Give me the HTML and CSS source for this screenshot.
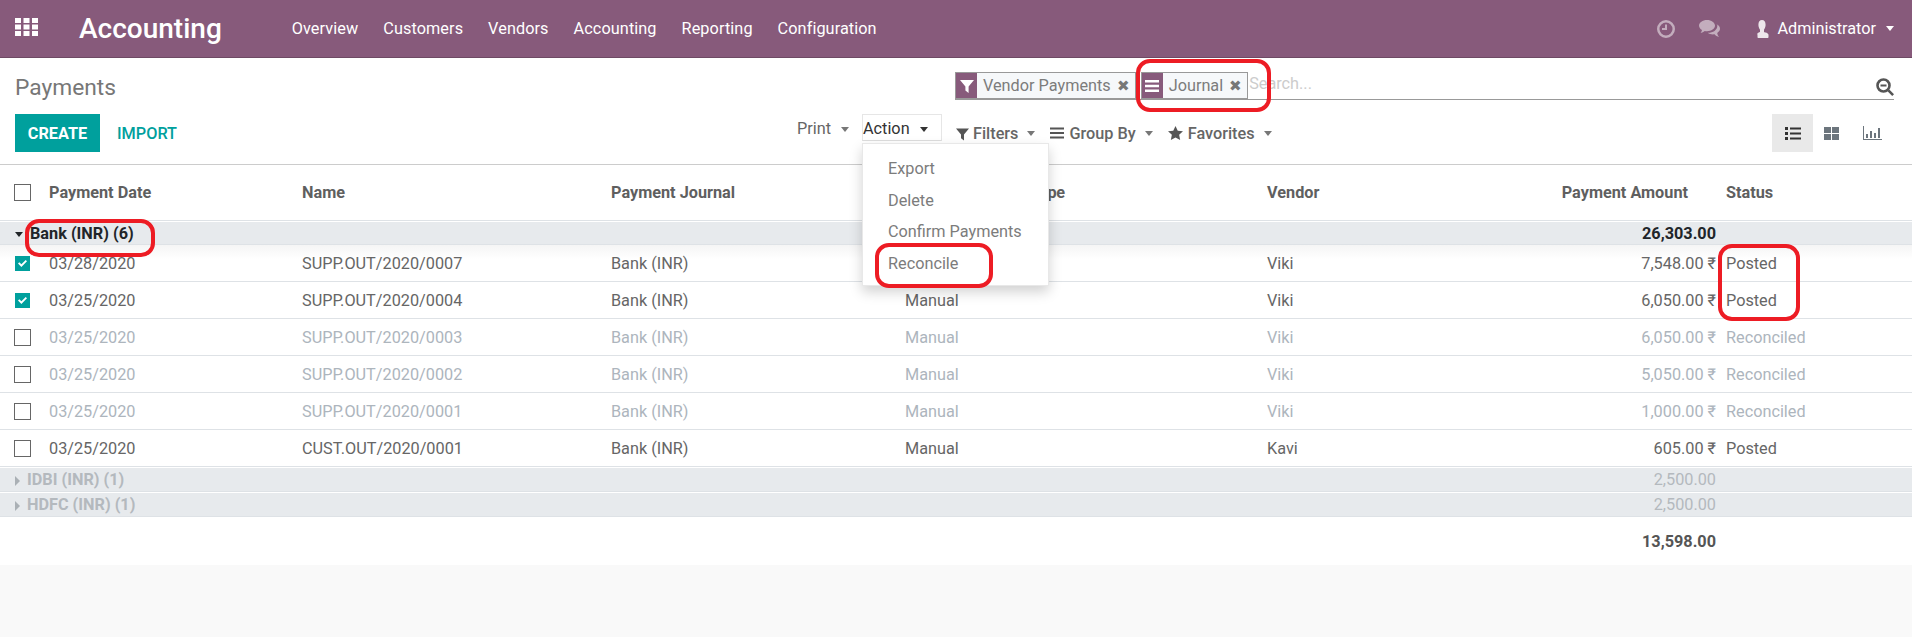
FILE: index.html
```html
<!DOCTYPE html>
<html lang="en">
<head>
    <meta charset="UTF-8">
    <meta name="viewport" content="width=device-width, initial-scale=1.0">
    <title>Payments</title>
    <link rel="stylesheet" href="styles.css">
</head>
<body>
    <nav class="navbar">
        <svg class="apps-icon" viewBox="0 0 23 18"><path d="M0 0h6v5H0zM8.500 0h6v5h-6zM17 0h6v5h-6zM0 6.500h6v5H0zM8.500 6.500h6v5h-6zM17 6.500h6v5h-6zM0 13h6v5H0zM8.500 13h6v5h-6zM17 13h6v5h-6z"/></svg>
        <span class="brand">Accounting</span>
        <a class="nav-link">Overview</a>
        <a class="nav-link">Customers</a>
        <a class="nav-link">Vendors</a>
        <a class="nav-link">Accounting</a>
        <a class="nav-link">Reporting</a>
        <a class="nav-link">Configuration</a>
        <div class="nav-right">
            <svg class="nav-icon clock" viewBox="0 0 18 18"><path fill-rule="evenodd" d="M9 0a9 9 0 1 1 0 18A9 9 0 0 1 9 0zm0 2.500a6.500 6.500 0 1 0 0 13 6.500 6.500 0 0 0 0-13zM8 4.500h2V10H5V8h3z"/></svg>
            <svg class="nav-icon comments" viewBox="0 0 21 17"><path d="M8 0c4.400 0 8 2.500 8 5.600s-3.600 5.600-8 5.600c-.8 0-1.500-.1-2.200-.2C4.600 12 3.200 12.600 1.600 12.900c.7-.8 1.200-1.700 1.400-2.800C1.200 9.100 0 7.500 0 5.600 0 2.500 3.600 0 8 0z"/><path d="M17.400 4.300C19.600 5.200 21 6.800 21 8.700c0 1.700-1.100 3.200-2.800 4.200.2 1.500.8 2.900 1.800 4-1.800-.4-3.400-1.300-4.500-2.600-.5.100-1 .100-1.500.100-2.100 0-4-.6-5.300-1.600 5.300.1 9.600-3 9.600-6.900 0-.5 0-1-.1-1.600z"/></svg>
            <svg class="nav-icon user" viewBox="0 0 16 18"><path d="M8 0c2.300 0 3.600 2 3.600 4.800 0 2-.8 3.900-1.600 5v2.200c1 .5 4.500.9 4.500 2.800V17c0 .6-.4 1-1 1h-9c-.6 0-1-.4-1-1v-2.200C2.500 12.900 5 12.500 6 12V9.800c-.8-1.100-1.600-3-1.600-5C4.400 2 5.700 0 8 0z"/></svg>
            <span class="nav-user">Administrator</span>
            <span class="caret caret-white"></span>
        </div>
    </nav>

    <header class="control-panel">
        <h1 class="page-title">Payments</h1>
        <div class="search-view">
            <div class="facet">
                <span class="facet-icon">
                    <svg viewBox="0 0 14 14"><path d="M0 1h14L8.600 7.500V14L5.400 11.500v-4z"/></svg>
                </span>
                <span class="facet-label">Vendor Payments</span>
                <span class="facet-remove">&#10006;</span>
            </div>
            <div class="facet">
                <span class="facet-icon">
                    <svg viewBox="0 0 14 14"><path d="M0 1h14v2.500H0zM0 5.800h14v2.500H0zM0 10.500h14V13H0z"/></svg>
                </span>
                <span class="facet-label">Journal</span>
                <span class="facet-remove">&#10006;</span>
            </div>
            <span class="search-placeholder">Search...</span>
            <svg class="search-icon" viewBox="0 0 18 18"><circle cx="7.500" cy="7.500" r="6" fill="none" stroke="#555" stroke-width="2.600"/><path d="M4.500 6.500h6v2h-6zM11.500 13.300l1.800-1.800 4.700 4.700-1.800 1.800z" fill="#555"/></svg>
        </div>

        <div class="panel-left">
            <div class="main-buttons">
                <button class="btn-create">CREATE</button>
                <button class="btn-import">IMPORT</button>
            </div>
            <div class="sidebar">
                <span class="sidebar-item">Print<span class="caret"></span></span>
                <div class="action-menu">
                    <span class="action-toggle">Action<span class="caret caret-dark"></span></span>
                    <ul class="dropdown">
                        <li>Export</li>
                        <li>Delete</li>
                        <li>Confirm Payments</li>
                        <li>Reconcile</li>
                    </ul>
                </div>
            </div>
        </div>
        <div class="panel-right">
            <div class="search-options">
                <span class="option">
                    <svg class="option-icon filter-icon" viewBox="0 0 14 14"><path d="M0 1h14L8.600 7.500V14L5.400 11.500v-4z"/></svg>Filters<span class="caret"></span>
                </span>
                <span class="option">
                    <svg class="option-icon bars-icon" viewBox="0 0 14 14"><path d="M0 1.500h14v2H0zM0 6h14v2H0zM0 10.500h14v2H0z"/></svg>Group By<span class="caret"></span>
                </span>
                <span class="option">
                    <svg class="option-icon star-icon" viewBox="0 0 16 15"><path d="M8 0l2.400 5 5.600.7-4.100 3.800 1.100 5.500L8 12.300 3 15l1.100-5.500L0 5.700 5.600 5z"/></svg>Favorites<span class="caret"></span>
                </span>
            </div>
            <div class="view-switch">
                <button class="view-btn active">
                    <svg class="view-list" viewBox="0 0 16 13"><path d="M0 0h3v3H0zM5 .500h11v2H5zM0 5h3v3H0zM5 5.500h11v2H5zM0 10h3v3H0zM5 10.500h11v2H5z"/></svg>
                </button>
                <button class="view-btn">
                    <svg class="view-kanban" viewBox="0 0 15 13"><path d="M0 0h7v6H0zM8 0h7v6H8zM0 7h7v6H0zM8 7h7v6H8z"/></svg>
                </button>
                <button class="view-btn">
                    <svg class="view-graph" viewBox="0 0 19 14"><path d="M0 0h1v13h18v1H0z"/><path d="M3 8h2v4H3zM7 5h2v7H7zM11 7h2v5h-2zM15 2h2v10h-2z"/></svg>
                </button>
            </div>
        </div>
    </header>

    <table class="list-table">
        <colgroup>
            <col class="col-select">
            <col class="col-date">
            <col class="col-name">
            <col class="col-journal">
            <col class="col-type">
            <col class="col-vendor">
            <col class="col-amount">
            <col class="col-status">
        </colgroup>
        <thead>
            <tr>
                <th><span class="checkbox"></span></th>
                <th>Payment Date</th>
                <th>Name</th>
                <th>Payment Journal</th>
                <th class="type-head">Payment Method Type</th>
                <th>Vendor</th>
                <th class="amount-head">Payment Amount</th>
                <th>Status</th>
            </tr>
        </thead>
        <tbody>
            <tr class="group-row">
                <td colspan="6"><span class="group-open"></span>Bank (INR) (6)</td>
                <td class="amount">26,303.00</td>
                <td></td>
            </tr>
            <tr class="first-row">
                <td><span class="checkbox checked"><svg viewBox="0 0 9 7"><path d="M0 3.500l1.300-1.300L3.400 4.300 7.700 0 9 1.300 3.400 7z"/></svg></span></td>
                <td>03/28/2020</td>
                <td>SUPP.OUT/2020/0007</td>
                <td>Bank (INR)</td>
                <td>Manual</td>
                <td>Viki</td>
                <td class="amount">7,548.00&nbsp;₹</td>
                <td>Posted</td>
            </tr>
            <tr>
                <td><span class="checkbox checked"><svg viewBox="0 0 9 7"><path d="M0 3.500l1.300-1.300L3.400 4.300 7.700 0 9 1.300 3.400 7z"/></svg></span></td>
                <td>03/25/2020</td>
                <td>SUPP.OUT/2020/0004</td>
                <td>Bank (INR)</td>
                <td>Manual</td>
                <td>Viki</td>
                <td class="amount">6,050.00&nbsp;₹</td>
                <td>Posted</td>
            </tr>
            <tr class="muted">
                <td><span class="checkbox"></span></td>
                <td>03/25/2020</td>
                <td>SUPP.OUT/2020/0003</td>
                <td>Bank (INR)</td>
                <td>Manual</td>
                <td>Viki</td>
                <td class="amount">6,050.00&nbsp;₹</td>
                <td>Reconciled</td>
            </tr>
            <tr class="muted">
                <td><span class="checkbox"></span></td>
                <td>03/25/2020</td>
                <td>SUPP.OUT/2020/0002</td>
                <td>Bank (INR)</td>
                <td>Manual</td>
                <td>Viki</td>
                <td class="amount">5,050.00&nbsp;₹</td>
                <td>Reconciled</td>
            </tr>
            <tr class="muted">
                <td><span class="checkbox"></span></td>
                <td>03/25/2020</td>
                <td>SUPP.OUT/2020/0001</td>
                <td>Bank (INR)</td>
                <td>Manual</td>
                <td>Viki</td>
                <td class="amount">1,000.00&nbsp;₹</td>
                <td>Reconciled</td>
            </tr>
            <tr>
                <td><span class="checkbox"></span></td>
                <td>03/25/2020</td>
                <td>CUST.OUT/2020/0001</td>
                <td>Bank (INR)</td>
                <td>Manual</td>
                <td>Kavi</td>
                <td class="amount">605.00&nbsp;₹</td>
                <td>Posted</td>
            </tr>
            <tr class="group-row closed">
                <td colspan="6"><span class="group-shut"></span>IDBI (INR) (1)</td>
                <td class="amount">2,500.00</td>
                <td></td>
            </tr>
            <tr class="group-row closed">
                <td colspan="6"><span class="group-shut"></span>HDFC (INR) (1)</td>
                <td class="amount">2,500.00</td>
                <td></td>
            </tr>
        </tbody>
        <tfoot>
            <tr>
                <td colspan="6"></td>
                <td class="amount">13,598.00</td>
                <td></td>
            </tr>
        </tfoot>
    </table>

    <!-- red marker rings drawn over the screenshot -->
    <div class="ring ring-journal"></div>
    <div class="ring ring-bank"></div>
    <div class="ring ring-reconcile"></div>
    <div class="ring ring-posted"></div>
</body>
</html>
```

FILE: styles.css
```css
* {
    box-sizing: border-box;
}
body {
    position: relative;
    margin: 0;
    min-height: 637px;
    background-color: #f9f9f9;
    font-family: Roboto, "Noto Sans", sans-serif;
    font-size: 16.250px;
    color: #666;
}
button {
    border: none;
    background: none;
    font-family: inherit;
    cursor: pointer;
}

/* top bar */
.navbar {
    display: flex;
    align-items: center;
    height: 58px;
    padding: 0 18px 0 15px;
    background-color: #875a7b;
    border-bottom: 1px solid #6e4a64;
    color: #fff;
}
.apps-icon {
    width: 23px;
    height: 18px;
    margin-bottom: 4px;
    fill: #fff;
}
.brand {
    margin-left: 41px;
    margin-right: 70px;
    font-size: 28px;
    font-weight: 500;
}
.nav-link {
    margin-right: 25px;
    font-size: 16.250px;
    letter-spacing: 0.080px;
}
.nav-right {
    display: flex;
    align-items: center;
    margin-left: auto;
}
.nav-icon {
    fill: #fff;
    opacity: 0.5;
}
.clock {
    width: 18px;
    height: 18px;
    margin-right: 24px;
}
.comments {
    width: 21px;
    height: 17px;
    margin-right: 34px;
}
.user {
    width: 16px;
    height: 18px;
    margin-right: 7px;
    opacity: 0.85;
}
.nav-user {
    font-size: 16.250px;
}
.caret {
    display: inline-block;
    margin-left: 10px;
    border-top: 5px solid #777;
    border-left: 4.500px solid transparent;
    border-right: 4.500px solid transparent;
    vertical-align: middle;
}
.caret-white {
    border-top-color: #fff;
}
.caret-dark {
    border-top-color: #333;
}

/* control panel */
.control-panel {
    display: grid;
    grid-template-columns: 955px 1fr;
    grid-template-rows: 56px 38px;
    height: 107px;
    padding-right: 18px;
    background-color: #fff;
    border-bottom: 1px solid #ccc;
}
.page-title {
    margin: 16px 0 0 15px;
    font-size: 22.750px;
    font-weight: 400;
    color: #777;
}
.search-view {
    display: flex;
    align-items: flex-start;
    height: 42px;
    padding-top: 14px;
    border-bottom: 1px solid #999;
}
.facet {
    display: flex;
    align-items: center;
    height: 27px;
    background-color: #f6f8fa;
    border: 1px solid #999;
}
.facet + .facet {
    margin-left: 5px;
}
.facet-icon {
    display: flex;
    align-items: center;
    justify-content: center;
    width: 21px;
    align-self: stretch;
    background-color: #875a7b;
}
.facet-icon svg {
    width: 14px;
    height: 14px;
    fill: #fff;
}
.facet-label {
    margin-left: 6px;
    color: #7c7c7c;
}
.facet-remove {
    margin: 0 5px 0 6px;
    font-size: 15px;
    color: #777;
}
.search-placeholder {
    margin: 2px 0 0 1px;
    color: #ccc;
}
.search-icon {
    width: 18px;
    height: 18px;
    margin: 6px 0 0 auto;
}
.panel-left {
    display: flex;
    justify-content: space-between;
    padding-right: 13px;
    padding-left: 15px;
}
.main-buttons {
    display: flex;
    align-items: stretch;
}
.btn-create {
    width: 85px;
    padding: 0;
    background-color: #00a09d;
    color: #fff;
    font-size: 16.250px;
    font-weight: 700;
}
.btn-import {
    margin-left: 17px;
    padding: 0;
    color: #00a09d;
    font-size: 16.250px;
    font-weight: 500;
}
.sidebar {
    display: flex;
    align-items: flex-start;
}
.sidebar-item {
    height: 27px;
    margin-right: 13px;
    line-height: 29px;
}
.action-menu {
    position: relative;
}
.action-toggle {
    display: block;
    width: 80px;
    height: 27px;
    line-height: 27px;
    border: 1px solid #e6e6e6;
    border-bottom-color: #ddd;
    color: #333;
}
.dropdown {
    position: absolute;
    z-index: 5;
    top: 29px;
    left: 0;
    width: 187px;
    height: 143px;
    margin: 0;
    padding: 9px 0 0 25px;
    list-style: none;
    background-color: #fff;
    border: 1px solid #e8e8e8;
    box-shadow: 0 6px 12px rgba(0, 0, 0, 0.18);
    color: #7c7c7c;
}
.dropdown li {
    height: 31.500px;
    line-height: 31.500px;
}
.panel-right {
    display: flex;
    justify-content: space-between;
}
.search-options {
    display: flex;
    align-items: center;
    height: 38px;
}
.option {
    display: flex;
    align-items: center;
    margin-right: 15px;
    font-weight: 500;
    font-size: 16.250px;
    color: #666;
}
.option .caret {
    margin-left: 9px;
}
.option-icon {
    fill: #555;
}
.filter-icon {
    width: 13px;
    height: 14px;
    margin: 1px 4px 0 1px;
}
.bars-icon {
    width: 14px;
    height: 14px;
    margin-right: 5px;
}
.star-icon {
    width: 15px;
    height: 14px;
    margin-right: 5px;
}
.view-switch {
    display: grid;
    grid-template-columns: 41px 37px 44px;
    height: 38px;
}
.view-btn {
    display: flex;
    align-items: center;
    justify-content: center;
    padding: 0;
}
.view-btn.active {
    background-color: #e9e9e9;
}
.view-list {
    width: 16px;
    height: 13px;
    fill: #333;
}
.view-kanban {
    width: 15px;
    height: 13px;
    fill: #6c757d;
}
.view-graph {
    width: 19px;
    height: 14px;
    fill: #6c757d;
}

/* list */
.list-table {
    width: 100%;
    table-layout: fixed;
    border-collapse: separate;
    border-spacing: 0;
    background-color: #fff;
}
.col-select { width: 41px; }
.col-date { width: 253px; }
.col-name { width: 309px; }
.col-journal { width: 294px; }
.col-type { width: 362px; }
.col-vendor { width: 200px; }
.col-amount { width: 261px; }
.col-status { width: 192px; }

.list-table th,
.list-table td {
    padding: 0 0 0 8px;
    text-align: left;
    white-space: nowrap;
}
.list-table th {
    height: 56px;
    font-weight: 700;
    font-size: 16.250px;
    color: #5f5f5f;
    border-bottom: 1px solid #dee2e6;
}
.list-table th:first-child,
.list-table td:first-child {
    padding-left: 14px;
}
.list-table th.type-head {
    letter-spacing: -0.200px;
}
.list-table tbody td {
    height: 37px;
    border-bottom: 1px solid #dee2e6;
}
.list-table td.amount {
    padding: 0 4px 0 0;
    text-align: right;
}
.list-table th.amount-head {
    padding: 0 32px 0 0;
    text-align: right;
}
.list-table td:last-child,
.list-table th:last-child {
    padding-left: 6px;
}
.checkbox {
    display: flex;
    align-items: center;
    justify-content: center;
    width: 17px;
    height: 17px;
    border: 1px solid #666;
}
.checkbox.checked {
    width: 15px;
    height: 15px;
    margin-left: 1px;
    border: none;
    background-color: #00a09d;
}
.checkbox svg {
    width: 9px;
    height: 7px;
    fill: #fff;
}
.first-row td {
    background: linear-gradient(#f5f5f5, #fff 40%);
}
.muted td {
    color: #adb5bd;
}
.group-row td {
    background-color: #e7eaed;
    border-top: 1px solid #fff;
    font-weight: 700;
    color: #212529;
}
.list-table tbody .group-row td {
    height: 24px;
}
.list-table tbody .group-row.closed td {
    height: 25px;
    color: #b4b9be;
}
.list-table tbody .group-row td.amount {
    font-weight: 700;
}
.list-table tbody .group-row.closed td.amount {
    font-weight: 400;
}
.list-table tbody .group-row td:first-child {
    padding-left: 15px;
}
.group-open {
    display: inline-block;
    margin-right: 7px;
    border-top: 5px solid #212529;
    border-left: 4.500px solid transparent;
    border-right: 4.500px solid transparent;
    vertical-align: middle;
}
.group-shut {
    display: inline-block;
    margin-right: 7px;
    border-left: 5px solid #aab0b5;
    border-top: 5px solid transparent;
    border-bottom: 5px solid transparent;
    vertical-align: -1px;
}
.list-table tfoot td {
    height: 48px;
    font-weight: 700;
    color: #555;
}

/* red marker rings */
.ring {
    position: absolute;
    z-index: 10;
    border: 4px solid #ed1c24;
    border-radius: 14px;
}
.ring-journal {
    left: 1136px;
    top: 59px;
    width: 135px;
    height: 53px;
}
.ring-bank {
    left: 25px;
    top: 219px;
    width: 130px;
    height: 38px;
}
.ring-reconcile {
    left: 875px;
    top: 243px;
    width: 118px;
    height: 45px;
}
.ring-posted {
    left: 1718px;
    top: 244px;
    width: 82px;
    height: 77px;
}
```
